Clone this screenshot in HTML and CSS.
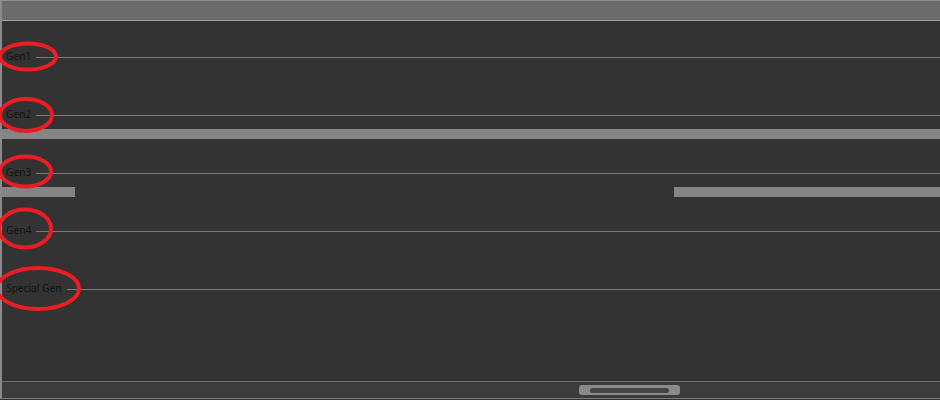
FILE: index.html
```html
<!DOCTYPE html>
<html>
<head>
<meta charset="utf-8">
<link rel="stylesheet" href="styles.css">
</head>
<body>
<div class="frame">
  <div class="header"></div>
  <div class="tracks">
    <div class="track">
      <div class="track-head"><span class="label">Gen1</span><div class="rule"></div></div>
      <div class="lane"></div>
    </div>
    <div class="track">
      <div class="track-head"><span class="label">Gen2</span><div class="rule"></div></div>
      <div class="lane"><div class="clip" style="left:0;width:938px"></div></div>
    </div>
    <div class="track">
      <div class="track-head"><span class="label">Gen3</span><div class="rule"></div></div>
      <div class="lane"><div class="clip" style="left:0;width:73px"></div><div class="clip" style="left:672px;width:266px"></div></div>
    </div>
    <div class="track">
      <div class="track-head"><span class="label">Gen4</span><div class="rule"></div></div>
      <div class="lane"></div>
    </div>
    <div class="track">
      <div class="track-head"><span class="label">Special Gen</span><div class="rule"></div></div>
      <div class="lane"></div>
    </div>
  </div>
  <div class="scrollbar">
    <div class="thumb"><div class="grip"></div></div>
  </div>
</div>
<svg class="marks" width="940" height="400" viewBox="0 0 940 400">
  <ellipse cx="28" cy="56.5" rx="28" ry="13" />
  <ellipse cx="26" cy="115" rx="26" ry="16" />
  <ellipse cx="25.5" cy="171.5" rx="25.5" ry="15" />
  <ellipse cx="25" cy="228.5" rx="26" ry="19" />
  <ellipse cx="38" cy="288.5" rx="41" ry="20.5" />
</svg>
</body>
</html>
```
FILE: styles.css
```css
html, body {
  margin: 0;
  padding: 0;
  background: #333333;
}
body {
  width: 940px;
  height: 400px;
  overflow: hidden;
  position: relative;
  font-family: "Noto Sans", "Open Sans", sans-serif;
}
.frame {
  width: 938px;
  height: 397px;
  border-left: 2px solid #8a8a8a;
  border-top: 1px solid #8e8e8e;
  border-bottom: 1px solid #7a7a7a;
  display: flex;
  flex-direction: column;
  background: #333333;
}
.header {
  height: 19px;
  background: #6b6b6b;
  border-bottom: 1px solid #a2a2a2;
  flex: none;
}
.tracks {
  flex: 1;
  padding-top: 8px;
  display: flex;
  flex-direction: column;
}
.track {
  height: 58px;
  padding-top: 20px;
  box-sizing: border-box;
  flex: none;
}
.track-head {
  height: 16px;
  display: flex;
  align-items: flex-start;
}
.label {
  font-size: 10.2px;
  line-height: 15px;
  color: #121212;
  padding-left: 4px;
  white-space: nowrap;
}
.rule {
  flex: 1;
  height: 1px;
  margin-top: 8px;
  margin-left: 5px;
  background: #7a7a7a;
}
.lane {
  position: relative;
  height: 10px;
  margin-top: 6px;
}
.clip {
  position: absolute;
  top: 0;
  height: 10px;
  background: #858585;
}
.scrollbar {
  height: 16px;
  flex: none;
  background: #3c3c3c;
  border-top: 1px solid #6e6e6e;
  display: flex;
  align-items: flex-start;
}
.thumb {
  margin-left: 577px;
  margin-top: 3px;
  width: 101px;
  height: 10px;
  border-radius: 3px;
  background: #8a8a8a;
  display: flex;
  align-items: center;
  justify-content: center;
}
.grip {
  width: 79px;
  height: 5px;
  border-radius: 3px;
  background: #454545;
}
.marks {
  position: absolute;
  left: 0;
  top: 0;
  pointer-events: none;
}
.marks ellipse {
  fill: none;
  stroke: #ec1c24;
  stroke-width: 4;
}
```
